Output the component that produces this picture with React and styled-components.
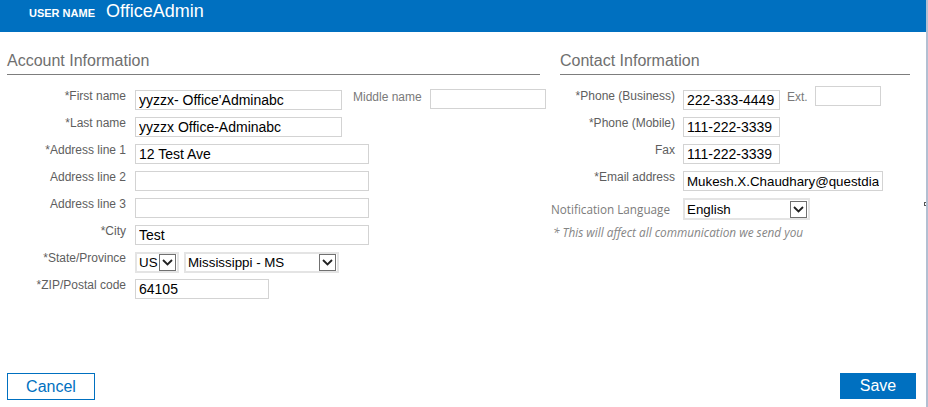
import React from "react";
import styled, { createGlobalStyle } from "styled-components";

const Global = createGlobalStyle`
  html, body { margin: 0; padding: 0; background: #fff; }
  body { font-family: "Liberation Sans", Arial, sans-serif; }
  * { box-sizing: border-box; }
`;

const Page = styled.div`
  position: relative;
  width: 928px;
  height: 407px;
  display: flex;
  flex-direction: column;
  border-right: 2px solid #b3bfd2;
  overflow: hidden;
`;

const Tick = styled.span`
  position: absolute;
  right: -1px;
  top: 202px;
  width: 3px;
  height: 4px;
  border: 1px solid #555;
  background: #fff;
`;

const Header = styled.header`
  height: 32px;
  background: #0070c0;
  color: #fff;
  display: flex;
  align-items: baseline;
  padding: 0 0 0 29px;
  gap: 11px;
  line-height: 1;
`;

const HeaderLabel = styled.span`
  font-size: 11px;
  font-weight: bold;
  padding-top: 8px;
`;

const HeaderName = styled.span`
  font-size: 18px;
  padding-top: 2px;
`;

const Columns = styled.main`
  display: flex;
  padding: 20px 0 0 7px;
  gap: 11px;
`;

const Panel = styled.section`
  width: ${(p) => p.$width}px;
  display: flex;
  flex-direction: column;
`;

const Title = styled.h2`
  margin: 0 0 15px ${(p) => p.$indent || 0}px;
  font-size: 16px;
  line-height: 18px;
  font-weight: normal;
  color: #6f6f6f;
  padding-bottom: 4px;
  border-bottom: 1px solid #7d7d7d;
`;

const FormGrid = styled.div`
  display: grid;
  grid-template-columns: ${(p) => p.$label}px 1fr;
  column-gap: ${(p) => p.$gap}px;
  row-gap: 7px;
  grid-auto-rows: 20px;
`;

const Label = styled.label`
  font-size: 12px;
  line-height: 14px;
  color: #5e5e5e;
  text-align: right;
  margin-top: -1px;
  white-space: nowrap;
`;

const SoftLabel = styled.label`
  font-family: "Open Sans", "Liberation Sans", sans-serif;
  font-size: 11.7px;
  line-height: 20px;
  color: #7b7b7b;
  white-space: nowrap;
  margin-top: 1px;
`;

const Field = styled.div`
  display: flex;
  align-items: flex-start;
  gap: ${(p) => p.$gap || 0}px;
`;

const Input = styled.input`
  width: ${(p) => p.$w}px;
  height: 20px;
  margin: 0;
  margin-top: ${(p) => p.$dy || 0}px;
  margin-left: ${(p) => p.$ml || 0}px;
  padding: 0 3px;
  border: 1px solid #d3d3d3;
  font-family: "Liberation Sans", Arial, sans-serif;
  font-size: ${(p) => p.$fs || 14}px;
  color: #000;
  background: #fff;
  outline: none;
`;

const InlineLabel = styled.span`
  font-size: 12px;
  line-height: 14px;
  color: #7a7a7a;
  margin-left: ${(p) => p.$ml || 0}px;
  white-space: nowrap;
`;

const Select = styled.div`
  width: ${(p) => p.$w}px;
  height: ${(p) => p.$h || 21}px;
  border: 2px solid #e4e4e4;
  display: flex;
  align-items: center;
  justify-content: space-between;
  padding: 0 1px 0 2px;
  font-size: 13.33px;
  color: #000;
  background: #fff;
`;

const Arrow = styled.span`
  width: 17px;
  height: 17px;
  border: 1px solid #707070;
  display: flex;
  align-items: center;
  justify-content: center;
  background: #fff;
`;

const Note = styled.p`
  margin: 6px 0 0 2px;
  font-family: "Open Sans", "Liberation Sans", sans-serif;
  font-style: italic;
  font-size: 11.8px;
  color: #858585;
`;

const Footer = styled.footer`
  margin-top: auto;
  display: flex;
  justify-content: space-between;
  align-items: flex-end;
  padding: 0 10px 7px 7px;
`;

const Button = styled.button`
  width: ${(p) => p.$w}px;
  height: ${(p) => p.$h}px;
  font-family: "Liberation Sans", Arial, sans-serif;
  font-size: 16px;
  border: 1px solid #0070c0;
  background: ${(p) => (p.$primary ? "#0070c0" : "#fff")};
  color: ${(p) => (p.$primary ? "#fff" : "#0070c0")};
  padding: 0;
  margin-bottom: ${(p) => p.$mb || 0}px;
`;

const Chevron = () => (
  <svg width="11" height="7" viewBox="0 0 11 7">
    <path d="M1 1 L5.5 5.5 L10 1" fill="none" stroke="#222" strokeWidth="1.8" />
  </svg>
);

const Dropdown = ({ w, h, value }) => (
  <Select $w={w} $h={h}>
    <span>{value}</span>
    <Arrow>
      <Chevron />
    </Arrow>
  </Select>
);

export default function App() {
  return (
    <>
      <Global />
      <Page>
        <Tick />
        <Header>
          <HeaderLabel>USER NAME</HeaderLabel>
          <HeaderName>OfficeAdmin</HeaderName>
        </Header>
        <Columns>
          <Panel $width={533}>
            <Title>Account Information</Title>
            <FormGrid $label={119} $gap={9}>
              <Label>*First name</Label>
              <Field>
                <Input $w={207} readOnly value="yyzzx- Office'Adminabc" />
                <InlineLabel $ml={11}>Middle name</InlineLabel>
                <Input $w={116} $dy={-1} $ml={8} readOnly value="" />
              </Field>
              <Label>*Last name</Label>
              <Field>
                <Input $w={207} readOnly value="yyzzx Office-Adminabc" />
              </Field>
              <Label>*Address line 1</Label>
              <Field>
                <Input $w={234} readOnly value="12 Test Ave" />
              </Field>
              <Label>Address line 2</Label>
              <Field>
                <Input $w={234} readOnly value="" />
              </Field>
              <Label>Address line 3</Label>
              <Field>
                <Input $w={234} readOnly value="" />
              </Field>
              <Label>*City</Label>
              <Field>
                <Input $w={234} readOnly value="Test" />
              </Field>
              <Label>*State/Province</Label>
              <Field $gap={5}>
                <Dropdown w={44} value="US" />
                <Dropdown w={155} value="Mississippi - MS" />
              </Field>
              <Label>*ZIP/Postal code</Label>
              <Field>
                <Input $w={134} readOnly value="64105" />
              </Field>
            </FormGrid>
          </Panel>
          <Panel $width={359}>
            <Title $indent={9}>Contact Information</Title>
            <FormGrid $label={124} $gap={8}>
              <Label>*Phone (Business)</Label>
              <Field>
                <Input $w={97} readOnly value="222-333-4449" />
                <InlineLabel $ml={7}>Ext.</InlineLabel>
                <Input $w={66} $dy={-4} $ml={7} readOnly value="" />
              </Field>
              <Label>*Phone (Mobile)</Label>
              <Field>
                <Input $w={97} readOnly value="111-222-3339" />
              </Field>
              <Label>Fax</Label>
              <Field>
                <Input $w={97} readOnly value="111-222-3339" />
              </Field>
              <Label>*Email address</Label>
              <Field>
                <Input $w={200} $fs={13.33} readOnly value="Mukesh.X.Chaudhary@questdiagnostics.com" />
              </Field>
              <SoftLabel>Notification Language</SoftLabel>
              <Field>
                <Dropdown w={127} h={22} value="English" />
              </Field>
            </FormGrid>
            <Note>* This will affect all communication we send you</Note>
          </Panel>
        </Columns>
        <Footer>
          <Button $w={88} $h={27}>Cancel</Button>
          <Button $primary $w={76} $h={26} $mb={1}>Save</Button>
        </Footer>
      </Page>
    </>
  );
}
